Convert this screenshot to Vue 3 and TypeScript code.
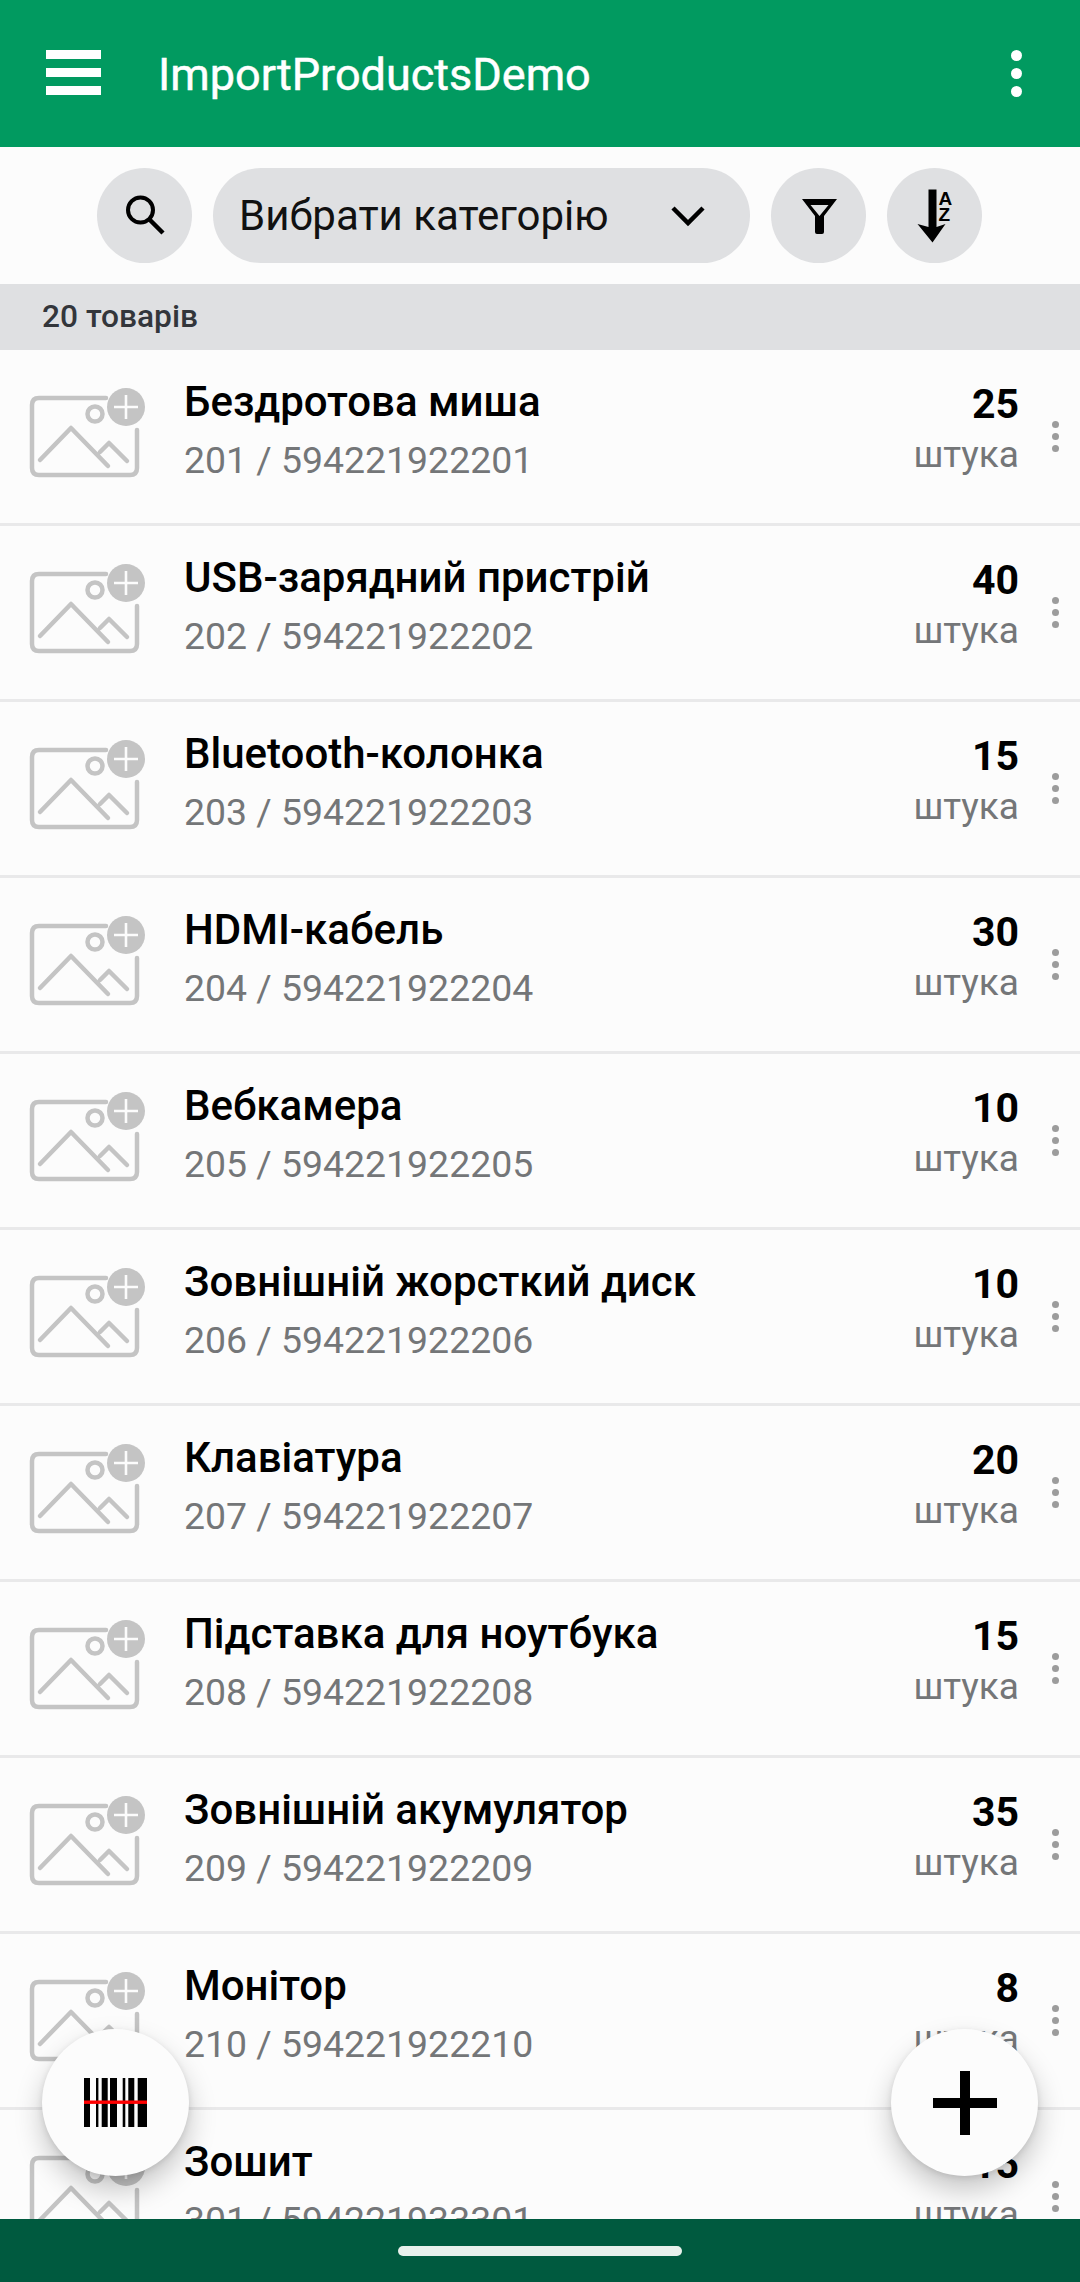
<script setup lang="ts">
interface Product {
  name: string
  code: string
  qty: number
}

const products: Product[] = [
  { name: 'Бездротова миша', code: '201 / 594221922201', qty: 25 },
  { name: 'USB-зарядний пристрій', code: '202 / 594221922202', qty: 40 },
  { name: 'Bluetooth-колонка', code: '203 / 594221922203', qty: 15 },
  { name: 'HDMI-кабель', code: '204 / 594221922204', qty: 30 },
  { name: 'Вебкамера', code: '205 / 594221922205', qty: 10 },
  { name: 'Зовнішній жорсткий диск', code: '206 / 594221922206', qty: 10 },
  { name: 'Клавіатура', code: '207 / 594221922207', qty: 20 },
  { name: 'Підставка для ноутбука', code: '208 / 594221922208', qty: 15 },
  { name: 'Зовнішній акумулятор', code: '209 / 594221922209', qty: 35 },
  { name: 'Монітор', code: '210 / 594221922210', qty: 8 },
  { name: 'Зошит', code: '301 / 594221933301', qty: 15 },
]
</script>

<template>
  <div class="screen">
    <header class="appbar">
      <div class="burger"><span></span><span></span><span></span></div>
      <div class="app-title">ImportProductsDemo</div>
      <div class="overflow"><span></span><span></span><span></span></div>
    </header>

    <div class="toolbar">
      <button class="round">
        <svg width="50" height="50" viewBox="0 0 50 50">
          <circle cx="20.5" cy="19" r="12.5" fill="none" stroke="#000" stroke-width="4" />
          <path d="M29 28 L43 42" stroke="#000" stroke-width="4.5" />
        </svg>
      </button>
      <div class="select">
        <span>Вибрати категорію</span>
        <svg width="36" height="22" viewBox="0 0 36 22">
          <path d="M3 3 L18 18 L33 3" fill="none" stroke="#000" stroke-width="4.5" />
        </svg>
      </div>
      <button class="round">
        <svg width="40" height="40" viewBox="0 0 40 40">
          <path d="M3 3 H38 L25 20 V36 Q25 38 23 38 H18 Q16 38 16 36 V20 Z M11.5 9 H29.5 L20.5 20 Z" fill="#000" fill-rule="evenodd" />
        </svg>
      </button>
      <button class="round">
        <svg width="60" height="64" viewBox="0 0 60 64">
          <path d="M23.5 5.5 H31.5 V43 L40.5 40 L27.5 58.5 L12.5 40 L23.5 43 Z" fill="#000" />
          <text x="33.5" y="20.5" class="az">A</text>
          <text x="33.5" y="37" class="az">Z</text>
        </svg>
      </button>
    </div>

    <div class="count">20 товарів</div>

    <div class="list">
      <div v-for="p in products" :key="p.code" class="row">
        <svg class="thumb" width="120" height="95" viewBox="0 0 120 95">
          <path d="M79 12 H12 Q5 12 5 19 V82 Q5 89 12 89 H103 Q110 89 110 82 V44" fill="none" stroke="#c4c4c4" stroke-width="4.5" stroke-linecap="round" />
          <circle cx="68" cy="28" r="7.5" fill="none" stroke="#c4c4c4" stroke-width="4.5" />
          <path d="M13 74 L44 42 L81 80 M73 66 L82 57 L100 75" fill="none" stroke="#c4c4c4" stroke-width="4.5" stroke-linecap="round" stroke-linejoin="round" />
          <circle cx="99" cy="21" r="19" fill="#c4c4c4" />
          <path d="M99 9 V33 M87 21 H111" stroke="#fcfcfc" stroke-width="2.6" />
        </svg>
        <div class="info">
          <div class="name">{{ p.name }}</div>
          <div class="code">{{ p.code }}</div>
        </div>
        <div class="amount">
          <div class="qty">{{ p.qty }}</div>
          <div class="unit">штука</div>
        </div>
        <div class="dots"><span></span><span></span><span></span></div>
      </div>
    </div>

    <button class="fab fab-left">
      <svg width="63" height="49" viewBox="0 0 63 49">
        <path d="M0 0h6v49h-6z M12 0h2.4v49h-2.4z M17.7 0h6v49h-6z M26 0h7v49h-7z M38.7 0h2.6v49h-2.6z M44.3 0h6v49h-6z M53.7 0h9.3v49h-9.3z" fill="#000" />
        <rect x="0" y="22.5" width="63" height="3.4" fill="#f00" />
      </svg>
    </button>
    <button class="fab fab-right">
      <svg width="64" height="64" viewBox="0 0 64 64">
        <path d="M27 0h10v27h27v10h-27v27h-10v-27h-27v-10h27z" fill="#000" />
      </svg>
    </button>

    <footer class="navbar"><span class="pill"></span></footer>
  </div>
</template>

<style scoped>
.screen {
  position: relative;
  width: 1080px;
  height: 2282px;
  display: flex;
  flex-direction: column;
  overflow: hidden;
  background: #fcfcfc;
  font-family: Roboto, "Noto Sans", sans-serif;
}
.appbar {
  flex: none;
  height: 147px;
  background: #019a60;
  display: flex;
  align-items: center;
  color: #fff;
  padding: 0 46px;
  box-sizing: border-box;
}
.burger {
  width: 55px;
  height: 45px;
  display: flex;
  flex-direction: column;
  justify-content: space-between;
  margin-bottom: 2px;
}
.burger span {
  display: block;
  height: 9px;
  background: #fff;
}
.app-title {
  flex: 1;
  margin-left: 57px;
  font-size: 45px;
  font-weight: 400;
  -webkit-text-stroke: 0.5px #fff;
  line-height: 50px;
  padding-top: 2px;
}
.overflow {
  display: flex;
  flex-direction: column;
  gap: 7px;
  margin-right: 12px;
}
.overflow span {
  width: 11px;
  height: 11px;
  border-radius: 50%;
  background: #fff;
}
.toolbar {
  flex: none;
  height: 137px;
  display: flex;
  align-items: center;
  gap: 21px;
  padding: 0 0 0 97px;
  box-sizing: border-box;
}
.round {
  width: 95px;
  height: 95px;
  flex: none;
  border: none;
  padding: 0;
  border-radius: 50%;
  background: #dfe0e2;
  display: flex;
  align-items: center;
  justify-content: center;
}
.select {
  width: 537px;
  height: 95px;
  flex: none;
  box-sizing: border-box;
  border-radius: 48px;
  background: #dfe0e2;
  display: flex;
  align-items: center;
  justify-content: space-between;
  padding: 0 44px 0 26px;
  font-size: 42px;
  color: #111;
}
.count {
  flex: none;
  height: 66px;
  line-height: 66px;
  background: #dfe0e2;
  padding-left: 42px;
  font-size: 31.7px;
  font-weight: 500;
  color: #33363b;
}
.list {
  flex: 1;
  min-height: 0;
  overflow: hidden;
}
.row {
  height: 176px;
  box-sizing: border-box;
  border-bottom: 3px solid #e9e9ea;
  display: flex;
  padding-left: 27px;
}
.thumb {
  flex: none;
  margin-top: 36px;
}
.info {
  flex: 1;
  margin-left: 37px;
  padding-top: 27px;
}
.name {
  font-size: 42px;
  font-weight: 500;
  line-height: 50px;
  color: #000;
}
.code {
  margin-top: 8px;
  font-size: 37.4px;
  line-height: 50px;
  color: #747678;
}
.amount {
  text-align: right;
  padding-top: 29px;
}
.qty {
  font-size: 41px;
  font-weight: 700;
  line-height: 50px;
  color: #000;
}
.unit {
  margin-top: 1px;
  font-size: 37px;
  line-height: 50px;
  color: #747678;
}
.dots {
  width: 61px;
  display: flex;
  flex-direction: column;
  align-items: center;
  gap: 5px;
  padding: 71px 0 0 11px;
  box-sizing: border-box;
}
.dots span {
  width: 7px;
  height: 7px;
  border-radius: 50%;
  background: #9c9c9c;
}
.fab {
  position: absolute;
  top: 2029px;
  width: 147px;
  height: 147px;
  border: none;
  padding: 0;
  border-radius: 50%;
  background: #fcfcfc;
  box-shadow: 0 14px 28px rgba(0, 0, 0, 0.22), 0 2px 6px rgba(0, 0, 0, 0.1);
  display: flex;
  align-items: center;
  justify-content: center;
}
.fab-left {
  left: 42px;
}
.fab-right {
  left: 891px;
}
.navbar {
  position: relative;
  flex: none;
  height: 63px;
  background: #005a3f;
  display: flex;
  justify-content: center;
  padding-top: 27px;
  box-sizing: border-box;
}
.pill {
  width: 284px;
  height: 10px;
  border-radius: 5px;
  background: #e8f0ec;
}
.az {
  font-family: "Liberation Sans", sans-serif;
  font-size: 19px;
  font-weight: 700;
  fill: #000;
}
</style>
